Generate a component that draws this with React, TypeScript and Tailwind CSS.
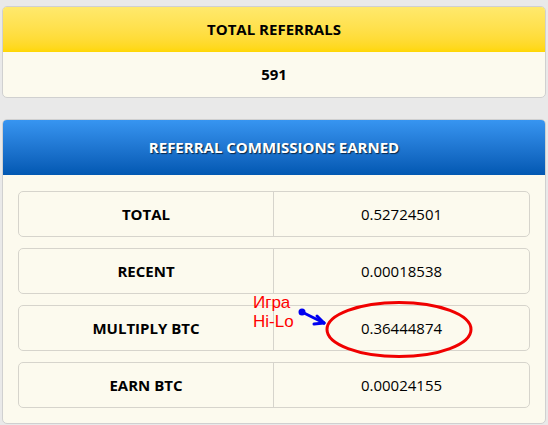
const ROWS = [
  { label: 'TOTAL', value: '0.52724501' },
  { label: 'RECENT', value: '0.00018538' },
  { label: 'MULTIPLY BTC', value: '0.36444874' },
  { label: 'EARN BTC', value: '0.00024155' },
]

function Annotation() {
  return (
    <div className="absolute left-[240px] top-[285px] w-[250px] h-[80px] pointer-events-none">
      <div className="absolute left-[13px] top-[8px] text-[17px] leading-[19px] text-[#ff0000] font-['Liberation_Sans',Arial,sans-serif]">
        <div>Игра</div>
        <div>Hi-Lo</div>
      </div>
      <svg className="absolute inset-0" width="250" height="80" viewBox="0 0 250 80">
        <ellipse cx="159" cy="44.5" rx="72" ry="27" fill="none" stroke="#f00000" strokeWidth="3" />
        <circle cx="62" cy="27" r="3.5" fill="#0000f0" />
        <g stroke="#0000f0" strokeWidth="3" strokeLinecap="round" fill="none">
          <line x1="62" y1="27" x2="84" y2="38" />
          <line x1="84" y1="38" x2="77" y2="31" />
          <line x1="84" y1="38" x2="74" y2="39" />
        </g>
      </svg>
    </div>
  )
}

export default function App() {
  return (
    <div className="relative h-[425px] overflow-hidden bg-[#e9e9e9] px-[2px] pt-[6px] font-['Open_Sans',sans-serif] text-[15px] text-black">
      {/* Total referrals */}
      <div className="rounded-[5px] border border-[#d0d0d0] bg-[#fcfaee] overflow-hidden">
        <div className="h-[45px] flex items-center justify-center bg-gradient-to-b from-[#ffe96c] to-[#ffd700] font-bold">
          TOTAL REFERRALS
        </div>
        <div className="h-[45px] flex items-center justify-center font-bold">591</div>
      </div>

      {/* Commissions */}
      <div className="mt-[21px] rounded-[5px] border border-[#d0d0d0] bg-[#fcfaee] overflow-hidden">
        <div className="h-[55px] flex items-center justify-center bg-gradient-to-b from-[#3795f1] to-[#0258b2] font-bold text-white [text-shadow:1px_1px_1px_rgba(0,0,0,0.65)]">
          REFERRAL COMMISSIONS EARNED
        </div>
        <div className="px-[15px] pt-[16px] pb-[15px] flex flex-col gap-[11px]">
          {ROWS.map(row => (
            <div
              key={row.label}
              className="h-[46px] grid grid-cols-2 rounded-[5px] border border-[#d6d4cc]"
            >
              <div className="flex items-center justify-center font-bold border-r border-[#d6d4cc]">
                {row.label}
              </div>
              <div className="flex items-center justify-center">{row.value}</div>
            </div>
          ))}
        </div>
      </div>

      <Annotation />
    </div>
  )
}
